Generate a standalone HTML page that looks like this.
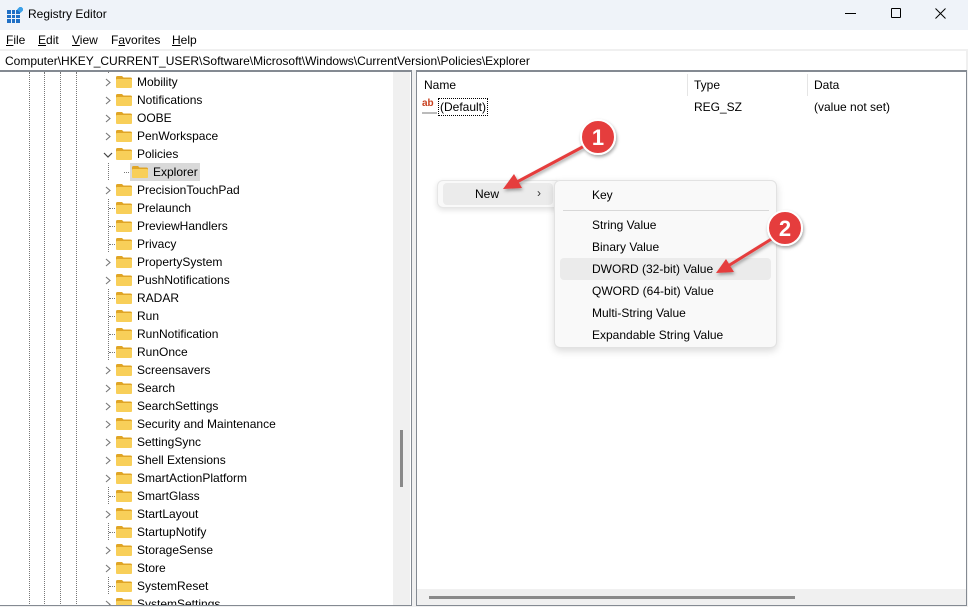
<!DOCTYPE html>
<html><head><meta charset="utf-8"><style>
*{margin:0;padding:0;box-sizing:border-box}
body{width:968px;height:607px;overflow:hidden;background:#f0f0f0;font-family:"Liberation Sans",sans-serif;font-size:12px;color:#000;position:relative}
.a{position:absolute}
.row{position:absolute;height:18px;line-height:18px;white-space:nowrap}
.fold{position:absolute;width:16px;height:12px;top:3px}
.dv{position:absolute;width:0;border-left:1px dotted #777}
.mi{position:absolute;left:37px;height:22px;line-height:22px;white-space:nowrap}
</style></head><body>
<div class="a" style="left:0;top:0;width:968px;height:30px;background:#eff3f9"></div>
<svg class="a" style="left:7px;top:7px" width="16" height="16" viewBox="0 0 16 16"><rect x="0" y="3" width="13" height="13" fill="#1f6fc5"/><g stroke="#eff3f9" stroke-width="1"><line x1="4.5" y1="3" x2="4.5" y2="16"/><line x1="8.5" y1="3" x2="8.5" y2="16"/><line x1="0" y1="7.5" x2="13" y2="7.5"/><line x1="0" y1="11.5" x2="13" y2="11.5"/></g><rect x="11" y="0" width="5" height="5" fill="#3ba0e8" transform="rotate(45 13.5 2.5)"/></svg>
<div class="a" style="left:28px;top:7px;font-size:12px">Registry Editor</div>
<div class="a" style="left:845px;top:13px;width:11px;height:1px;background:#000"></div>
<div class="a" style="left:891px;top:8px;width:10px;height:10px;border:1px solid #000;border-radius:1px"></div>
<svg class="a" style="left:935px;top:8px" width="11" height="11"><path d="M0.5 0.5L10.5 10.5M10.5 0.5L0.5 10.5" stroke="#000" stroke-width="1"/></svg>
<div class="a" style="left:0;top:30px;width:968px;height:19px;background:#fff"></div>
<div class="a" style="left:6px;top:33px"><u>F</u>ile</div>
<div class="a" style="left:38px;top:33px"><u>E</u>dit</div>
<div class="a" style="left:72px;top:33px"><u>V</u>iew</div>
<div class="a" style="left:111px;top:33px">F<u>a</u>vorites</div>
<div class="a" style="left:172px;top:33px"><u>H</u>elp</div>
<div class="a" style="left:0;top:51px;width:966px;height:19px;background:#fff"></div>
<div class="a" style="left:5px;top:54px">Computer\HKEY_CURRENT_USER\Software\Microsoft\Windows\CurrentVersion\Policies\Explorer</div>
<div class="a" style="left:0;top:70px;width:412px;height:536px;background:#fff;border-top:2px solid #848a92;border-right:1px solid #848a92;border-bottom:1px solid #848a92;overflow:hidden">
<div class="dv" style="left:29px;top:0;height:540px"></div>
<div class="dv" style="left:44px;top:0;height:540px"></div>
<div class="dv" style="left:60px;top:0;height:540px"></div>
<div class="dv" style="left:76px;top:0;height:540px"></div>
<div class="dv" style="left:108px;top:0;height:540px"></div>
<div class="a" style="left:393px;top:0;width:17px;height:540px;background:#f0f0f0"></div>
<div class="a" style="left:400px;top:358px;width:3px;height:57px;background:#8a8a8a"></div>
</div>
<div class="a" style="left:0;top:72px;width:392px;height:533px;overflow:hidden" id="tree"></div>
<div class="a" style="left:416px;top:70px;width:551px;height:536px;background:#fff;border:1px solid #848a92;border-top:2px solid #848a92"></div>
<div class="a" style="left:687px;top:74px;width:1px;height:22px;background:#e5e5e5"></div>
<div class="a" style="left:807px;top:74px;width:1px;height:22px;background:#e5e5e5"></div>
<div class="a" style="left:424px;top:78px">Name</div>
<div class="a" style="left:694px;top:78px">Type</div>
<div class="a" style="left:814px;top:78px">Data</div>
<div class="a" style="left:422px;top:99px;width:15px;height:15px;font-size:10px;font-weight:bold;color:#c8401f;line-height:10px;border-bottom:2px solid #bbb">ab</div>
<div class="a" style="left:438px;top:98px;padding:1px 1px;border:1px dotted #000;line-height:14px">(Default)</div>
<div class="a" style="left:694px;top:100px">REG_SZ</div>
<div class="a" style="left:814px;top:100px">(value not set)</div>
<div class="a" style="left:417px;top:589px;width:549px;height:16px;background:#f0f0f0"></div>
<div class="a" style="left:429px;top:596px;width:366px;height:3px;background:#8a8a8a"></div>
<div class="a" style="left:437px;top:180px;width:125px;height:28px;background:#f9f9f9;border:1px solid #e6e6e6;border-radius:6px;box-shadow:0 2px 6px rgba(0,0,0,.12)"></div>
<div class="a" style="left:443px;top:183px;width:110px;height:22px;background:#ebebeb;border-radius:4px"></div>
<div class="a" style="left:475px;top:187px">New</div>
<div class="a" style="left:537px;top:186px;color:#333">›</div>
<div class="a" style="left:554px;top:180px;width:223px;height:168px;background:#f9f9f9;border:1px solid #e2e2e2;border-radius:6px;box-shadow:0 3px 8px rgba(0,0,0,.15)">
<div class="mi" style="top:3px">Key</div>
<div class="a" style="left:8px;top:29px;width:206px;height:1px;background:#d8d8d8"></div>
<div class="mi" style="top:33px">String Value</div>
<div class="mi" style="top:55px">Binary Value</div>
<div class="a" style="left:5px;top:77px;width:211px;height:22px;background:#ebebeb;border-radius:4px"></div>
<div class="mi" style="top:77px">DWORD (32-bit) Value</div>
<div class="mi" style="top:99px">QWORD (64-bit) Value</div>
<div class="mi" style="top:121px">Multi-String Value</div>
<div class="mi" style="top:143px">Expandable String Value</div>
</div>
<svg class="a" style="left:0;top:0" width="968" height="607">
<defs><filter id="s"><feDropShadow dx="1" dy="2" stdDeviation="1.5" flood-opacity=".35"/></filter></defs>
<g filter="url(#s)">
<line x1="590" y1="143" x2="515" y2="183" stroke="#e53c3c" stroke-width="3"/>
<polygon points="503,189 514,174 522,188" fill="#e53c3c"/>
<circle cx="598" cy="137" r="17" fill="#e53c3c" stroke="#fff" stroke-width="2"/>
<line x1="778" y1="235" x2="728" y2="266" stroke="#e53c3c" stroke-width="3"/>
<polygon points="716,273 726,259 734,272" fill="#e53c3c"/>
<circle cx="785" cy="228" r="17" fill="#e53c3c" stroke="#fff" stroke-width="2"/>
</g>
<text x="598" y="145" font-family="Liberation Sans" font-weight="bold" font-size="22" fill="#fff" text-anchor="middle">1</text>
<text x="785" y="236" font-family="Liberation Sans" font-weight="bold" font-size="22" fill="#fff" text-anchor="middle">2</text>
</svg>
<script>
var items=[["Mobility",1],["Notifications",1],["OOBE",1],["PenWorkspace",1],["Policies",2],["Explorer",3],["PrecisionTouchPad",1],["Prelaunch",0],["PreviewHandlers",0],["Privacy",0],["PropertySystem",1],["PushNotifications",1],["RADAR",0],["Run",0],["RunNotification",0],["RunOnce",0],["Screensavers",1],["Search",1],["SearchSettings",1],["Security and Maintenance",1],["SettingSync",1],["Shell Extensions",1],["SmartActionPlatform",1],["SmartGlass",0],["StartLayout",1],["StartupNotify",0],["StorageSense",1],["Store",1],["SystemReset",0],["SystemSettings",1]];
var h="";
var fold=function(x){return '<svg class="fold" style="left:'+x+'px" width="16" height="12" viewBox="0 0 16 12"><path d="M0 1.5Q0 0 1.5 0H6l1.5 1.5H14.5Q16 1.5 16 3V11H0Z" fill="#e0a526"/><rect x="0" y="3" width="16" height="9" rx="1" fill="#f8cf59"/></svg>'};
items.forEach(function(it,i){
 var t=i*18+1,n=it[0],k=it[1];
 if(k==3){
  h+='<div class="row" style="top:'+t+'px;left:0;width:392px"><div class="a" style="left:124px;top:9px;width:7px;border-top:1px dotted #777"></div><div class="a" style="left:130px;top:0;width:70px;height:18px;background:#d9d9d9"></div>'+fold(132)+'<span class="a" style="left:153px">'+n+'</span></div>';
  return;}
 h+='<div class="row" style="top:'+t+'px;left:0;width:392px">';
 if(k==1)h+='<div class="a" style="left:103px;top:0;width:11px;height:18px;background:#fff"></div><svg class="a" style="left:104px;top:5px" width="8" height="9"><path d="M2 1l4 3.5L2 8" fill="none" stroke="#777" stroke-width="1.1"/></svg>';
 else if(k==2)h+='<div class="a" style="left:102px;top:0;width:12px;height:18px;background:#fff"></div><svg class="a" style="left:103px;top:6px" width="10" height="8"><path d="M1 2l4 4 4-4" fill="none" stroke="#444" stroke-width="1.2"/></svg>';
 else h+='<div class="a" style="left:109px;top:9px;width:6px;border-top:1px dotted #777"></div>';
 h+=fold(116)+'<span class="a" style="left:137px">'+n+'</span></div>';
});
document.getElementById("tree").innerHTML=h;
</script>
</body></html>
